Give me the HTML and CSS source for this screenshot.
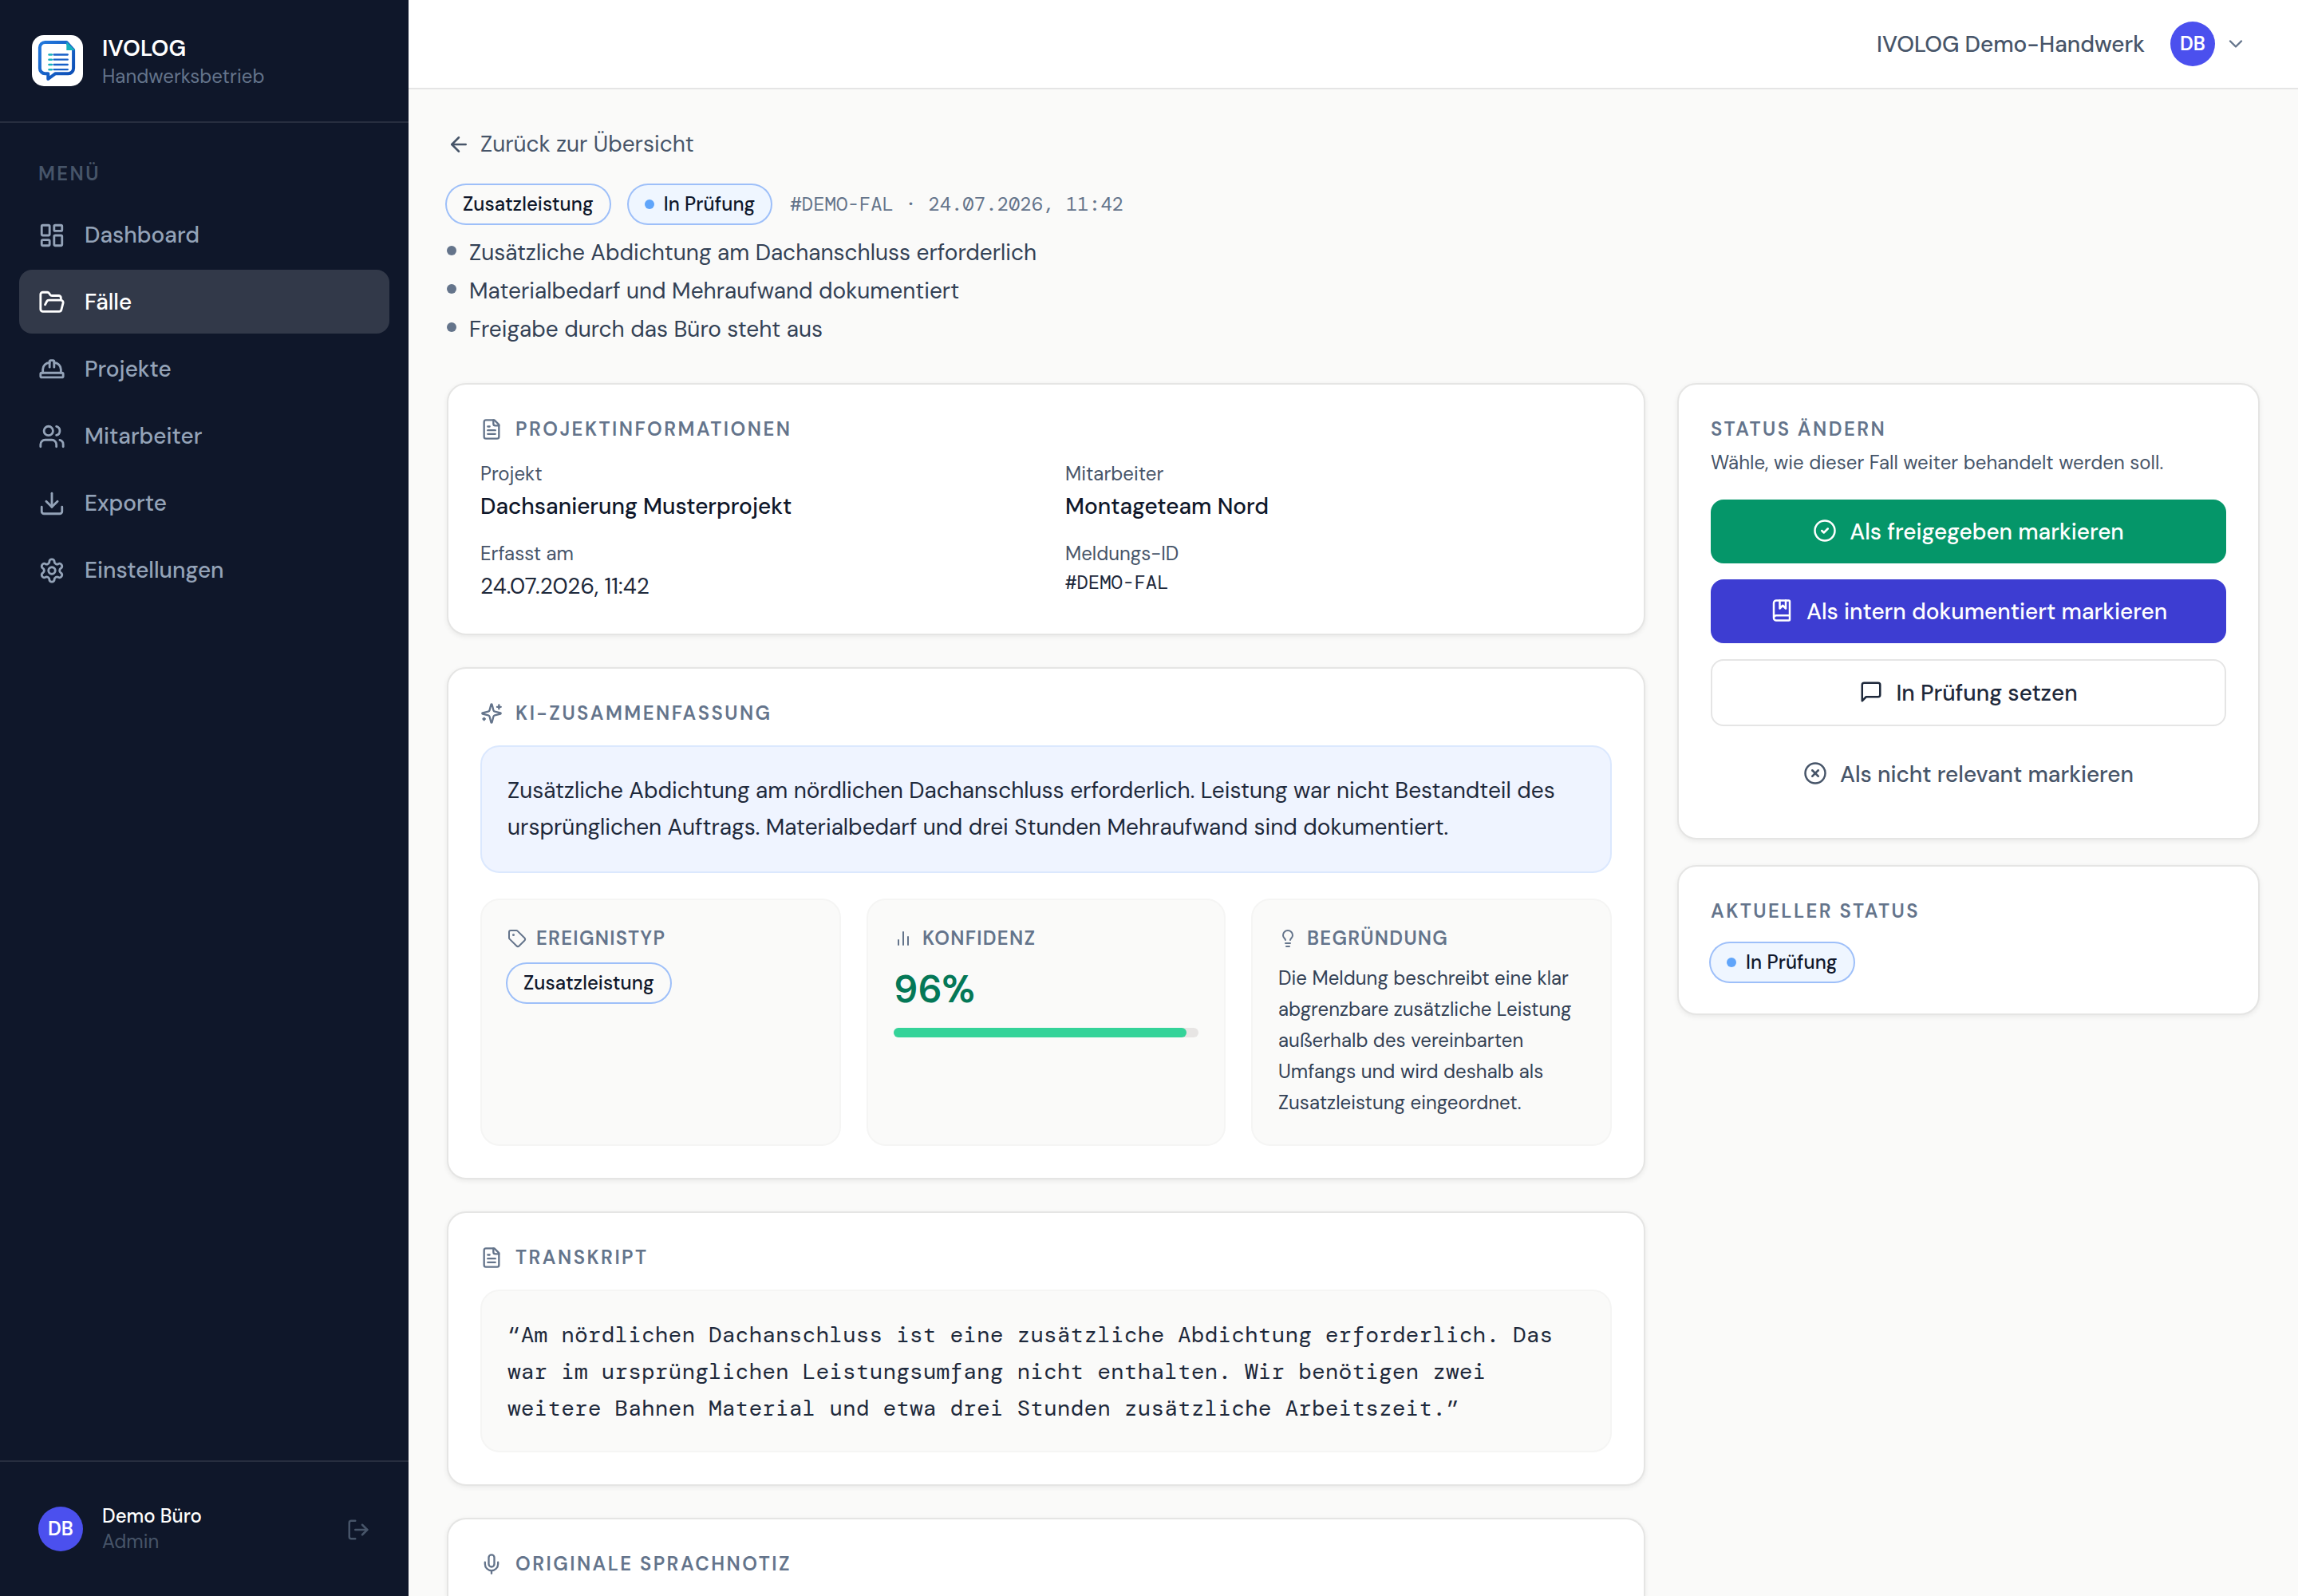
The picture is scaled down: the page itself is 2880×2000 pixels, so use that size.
FILE: index.html
```
<!DOCTYPE html>
<html lang="de">
<head>
<meta charset="utf-8">
<title>IVOLOG – Fall #DEMO-FAL</title>
<link rel="stylesheet" href="styles.css">
</head>
<body>
<svg class="sprite" aria-hidden="true">
  <symbol id="i-dashboard" viewBox="0 0 24 24"><rect x="3" y="3" width="7" height="9" rx="1"/><rect x="14" y="3" width="7" height="5" rx="1"/><rect x="14" y="12" width="7" height="9" rx="1"/><rect x="3" y="16" width="7" height="5" rx="1"/></symbol>
  <symbol id="i-folder" viewBox="0 0 24 24"><path d="m6 14 1.5-2.9A2 2 0 0 1 9.24 10H20a2 2 0 0 1 1.94 2.5l-1.54 6a2 2 0 0 1-1.95 1.5H4a2 2 0 0 1-2-2V5a2 2 0 0 1 2-2h3.9a2 2 0 0 1 1.69.9l.81 1.2a2 2 0 0 0 1.67.9H18a2 2 0 0 1 2 2v2"/></symbol>
  <symbol id="i-hat" viewBox="0 0 24 24"><path d="M2 18a1 1 0 0 0 1 1h18a1 1 0 0 0 1-1v-2a1 1 0 0 0-1-1H3a1 1 0 0 0-1 1v2z"/><path d="M10 10V5a1 1 0 0 1 1-1h2a1 1 0 0 1 1 1v5"/><path d="M4 15v-3a6 6 0 0 1 6-6"/><path d="M14 6a6 6 0 0 1 6 6v3"/></symbol>
  <symbol id="i-users" viewBox="0 0 24 24"><path d="M16 21v-2a4 4 0 0 0-4-4H6a4 4 0 0 0-4 4v2"/><circle cx="9" cy="7" r="4"/><path d="M22 21v-2a4 4 0 0 0-3-3.87"/><path d="M16 3.13a4 4 0 0 1 0 7.75"/></symbol>
  <symbol id="i-download" viewBox="0 0 24 24"><path d="M21 15v4a2 2 0 0 1-2 2H5a2 2 0 0 1-2-2v-4"/><path d="m7 10 5 5 5-5"/><path d="M12 15V3"/></symbol>
  <symbol id="i-settings" viewBox="0 0 24 24"><path d="M12.22 2h-.44a2 2 0 0 0-2 2v.18a2 2 0 0 1-1 1.73l-.43.25a2 2 0 0 1-2 0l-.15-.08a2 2 0 0 0-2.73.73l-.22.38a2 2 0 0 0 .73 2.73l.15.1a2 2 0 0 1 1 1.72v.51a2 2 0 0 1-1 1.74l-.15.09a2 2 0 0 0-.73 2.73l.22.38a2 2 0 0 0 2.73.73l.15-.08a2 2 0 0 1 2 0l.43.25a2 2 0 0 1 1 1.73V20a2 2 0 0 0 2 2h.44a2 2 0 0 0 2-2v-.18a2 2 0 0 1 1-1.73l.43-.25a2 2 0 0 1 2 0l.15.08a2 2 0 0 0 2.73-.73l.22-.39a2 2 0 0 0-.73-2.73l-.15-.08a2 2 0 0 1-1-1.74v-.5a2 2 0 0 1 1-1.74l.15-.09a2 2 0 0 0 .73-2.73l-.22-.38a2 2 0 0 0-2.73-.73l-.15.08a2 2 0 0 1-2 0l-.43-.25a2 2 0 0 1-1-1.73V4a2 2 0 0 0-2-2z"/><circle cx="12" cy="12" r="3"/></symbol>
  <symbol id="i-logout" viewBox="0 0 24 24"><path d="M9 21H5a2 2 0 0 1-2-2V5a2 2 0 0 1 2-2h4"/><path d="m16 17 5-5-5-5"/><path d="M21 12H9"/></symbol>
  <symbol id="i-chevron" viewBox="0 0 24 24"><path d="m6 9 6 6 6-6"/></symbol>
  <symbol id="i-back" viewBox="0 0 24 24"><path d="m12 19-7-7 7-7"/><path d="M19 12H5"/></symbol>
  <symbol id="i-file" viewBox="0 0 24 24"><path d="M15 2H6a2 2 0 0 0-2 2v16a2 2 0 0 0 2 2h12a2 2 0 0 0 2-2V7Z"/><path d="M14 2v4a2 2 0 0 0 2 2h4"/><path d="M10 9H8"/><path d="M16 13H8"/><path d="M16 17H8"/></symbol>
  <symbol id="i-sparkles" viewBox="0 0 24 24"><path d="M9.937 15.5A2 2 0 0 0 8.5 14.063l-6.135-1.582a.5.5 0 0 1 0-.962L8.5 9.936A2 2 0 0 0 9.937 8.5l1.582-6.135a.5.5 0 0 1 .963 0L14.063 8.5A2 2 0 0 0 15.5 9.937l6.135 1.581a.5.5 0 0 1 0 .964L15.5 14.063a2 2 0 0 0-1.437 1.437l-1.582 6.135a.5.5 0 0 1-.963 0z"/><path d="M20 3v4"/><path d="M22 5h-4"/><path d="M4 17v2"/><path d="M5 18H3"/></symbol>
  <symbol id="i-tag" viewBox="0 0 24 24"><path d="M12.586 2.586A2 2 0 0 0 11.172 2H4a2 2 0 0 0-2 2v7.172a2 2 0 0 0 .586 1.414l8.704 8.704a2.426 2.426 0 0 0 3.42 0l6.58-6.58a2.426 2.426 0 0 0 0-3.42z"/><circle cx="7.5" cy="7.5" r=".5" fill="currentColor"/></symbol>
  <symbol id="i-bars" viewBox="0 0 24 24"><path d="M18 20V10"/><path d="M12 20V4"/><path d="M6 20v-6"/></symbol>
  <symbol id="i-bulb" viewBox="0 0 24 24"><path d="M15 14c.2-1 .7-1.7 1.5-2.5 1-.9 1.5-2.2 1.5-3.5A6 6 0 0 0 6 8c0 1 .2 2.2 1.5 3.5.7.7 1.3 1.5 1.5 2.5"/><path d="M9 18h6"/><path d="M10 22h4"/></symbol>
  <symbol id="i-mic" viewBox="0 0 24 24"><path d="M12 2a3 3 0 0 0-3 3v7a3 3 0 0 0 6 0V5a3 3 0 0 0-3-3Z"/><path d="M19 10v2a7 7 0 0 1-14 0v-2"/><path d="M12 19v3"/></symbol>
  <symbol id="i-check" viewBox="0 0 24 24"><circle cx="12" cy="12" r="10"/><path d="m9 12 2 2 4-4"/></symbol>
  <symbol id="i-book" viewBox="0 0 24 24"><path d="M10 2v8l3-3 3 3V2"/><path d="M4 19.500v-15A2.500 2.500 0 0 1 6.500 2H19a1 1 0 0 1 1 1v18a1 1 0 0 1-1 1H6.500a1 1 0 0 1 0-5H20"/></symbol>
  <symbol id="i-message" viewBox="0 0 24 24"><path d="M21 15a2 2 0 0 1-2 2H7l-4 4V5a2 2 0 0 1 2-2h14a2 2 0 0 1 2 2z"/></symbol>
  <symbol id="i-x" viewBox="0 0 24 24"><circle cx="12" cy="12" r="10"/><path d="m15 9-6 6"/><path d="m9 9 6 6"/></symbol>
</svg>

<div class="app">
  <aside class="sidebar">
    <div class="brand">
      <svg class="logo" viewBox="0 0 64 64">
        <defs><linearGradient id="brand-blue" x1="0" y1="0" x2="1" y2="1"><stop offset="0" stop-color="#2379dd"/><stop offset="1" stop-color="#0b4bb3"/></linearGradient></defs>
        <rect width="64" height="64" rx="15" fill="#fff"/>
        <path d="M43.500 9H16.500A6.600 6.600 0 0 0 9.900 15.600V41.500A6.600 6.600 0 0 0 16.500 48.200H20.300V55L29.500 48.200H45.500A6.600 6.600 0 0 0 52.100 41.500V18.500Z" fill="none" stroke="url(#brand-blue)" stroke-width="4" stroke-linejoin="round"/>
        <path d="M43.300 8.300L54 19H43.300Z" fill="#17b1bd"/>
        <path d="M21.500 24.500h3.300M21.500 30.700h3.300M21.500 37h3.300M21.500 43.200h3.300" stroke="#17b1bd" stroke-width="2.600" stroke-linecap="round"/>
        <path d="M27.500 24.500h17.300M27.500 30.700h17.300M27.500 37h17.300M27.500 43.200h17.300" stroke="#1860c8" stroke-width="2.300" stroke-linecap="round"/>
      </svg>
      <div class="brand-text"><div class="brand-name">IVOLOG</div><div class="brand-sub">Handwerksbetrieb</div></div>
    </div>
    <nav class="nav">
      <div class="nav-label">MENÜ</div>
      <a class="nav-item"><svg class="icon"><use href="#i-dashboard"/></svg>Dashboard</a>
      <a class="nav-item active"><svg class="icon"><use href="#i-folder"/></svg>Fälle</a>
      <a class="nav-item"><svg class="icon"><use href="#i-hat"/></svg>Projekte</a>
      <a class="nav-item"><svg class="icon"><use href="#i-users"/></svg>Mitarbeiter</a>
      <a class="nav-item"><svg class="icon"><use href="#i-download"/></svg>Exporte</a>
      <a class="nav-item"><svg class="icon"><use href="#i-settings"/></svg>Einstellungen</a>
    </nav>
    <div class="user">
      <span class="avatar">DB</span>
      <div class="user-text"><div class="user-name">Demo Büro</div><div class="user-role">Admin</div></div>
      <svg class="icon logout"><use href="#i-logout"/></svg>
    </div>
  </aside>

  <div class="page">
    <header class="topbar">
      <span class="company">IVOLOG Demo-Handwerk</span>
      <span class="avatar">DB</span>
      <svg class="icon chevron"><use href="#i-chevron"/></svg>
    </header>
    <main class="content">
      <a class="back"><svg class="icon"><use href="#i-back"/></svg>Zurück zur Übersicht</a>
      <div class="meta">
        <span class="pill">Zusatzleistung</span>
        <span class="pill pill-blue"><i class="dot"></i>In Prüfung</span>
        <span class="mono meta-id">#DEMO-FAL · 24.07.2026, 11:42</span>
      </div>
      <ul class="points">
        <li>Zusätzliche Abdichtung am Dachanschluss erforderlich</li>
        <li>Materialbedarf und Mehraufwand dokumentiert</li>
        <li>Freigabe durch das Büro steht aus</li>
      </ul>

      <div class="columns">
        <div class="main-col">
          <section class="card">
            <h2 class="title title-info"><svg class="icon"><use href="#i-file"/></svg>PROJEKTINFORMATIONEN</h2>
            <dl class="facts">
              <div><dt>Projekt</dt><dd class="strong">Dachsanierung Musterprojekt</dd></div>
              <div><dt>Mitarbeiter</dt><dd class="strong">Montageteam Nord</dd></div>
              <div><dt>Erfasst am</dt><dd>24.07.2026, 11:42</dd></div>
              <div><dt>Meldungs-ID</dt><dd class="mono fact-id">#DEMO-FAL</dd></div>
            </dl>
          </section>

          <section class="card">
            <h2 class="title"><svg class="icon"><use href="#i-sparkles"/></svg>KI-ZUSAMMENFASSUNG</h2>
            <p class="summary">Zusätzliche Abdichtung am nördlichen Dachanschluss erforderlich. Leistung war nicht Bestandteil des<br>ursprünglichen Auftrags. Materialbedarf und drei Stunden Mehraufwand sind dokumentiert.</p>
            <div class="tiles">
              <div class="tile">
                <h3 class="tile-title"><svg class="icon"><use href="#i-tag"/></svg>EREIGNISTYP</h3>
                <span class="pill tile-pill">Zusatzleistung</span>
              </div>
              <div class="tile">
                <h3 class="tile-title"><svg class="icon"><use href="#i-bars"/></svg>KONFIDENZ</h3>
                <div class="percent">96%</div>
                <div class="track"><div class="fill" style="width:96%"></div></div>
              </div>
              <div class="tile">
                <h3 class="tile-title"><svg class="icon"><use href="#i-bulb"/></svg>BEGRÜNDUNG</h3>
                <p class="reason">Die Meldung beschreibt eine klar<br>abgrenzbare zusätzliche Leistung<br>außerhalb des vereinbarten<br>Umfangs und wird deshalb als<br>Zusatzleistung eingeordnet.</p>
              </div>
            </div>
          </section>

          <section class="card">
            <h2 class="title"><svg class="icon"><use href="#i-file"/></svg>TRANSKRIPT</h2>
            <p class="transcript mono">“Am nördlichen Dachanschluss ist eine zusätzliche Abdichtung erforderlich. Das<br>war im ursprünglichen Leistungsumfang nicht enthalten. Wir benötigen zwei<br>weitere Bahnen Material und etwa drei Stunden zusätzliche Arbeitszeit.”</p>
          </section>

          <section class="card card-audio">
            <h2 class="title"><svg class="icon"><use href="#i-mic"/></svg>ORIGINALE SPRACHNOTIZ</h2>
          </section>
        </div>

        <div class="side-col">
          <section class="card">
            <h2 class="title title-plain">STATUS ÄNDERN</h2>
            <p class="hint">Wähle, wie dieser Fall weiter behandelt werden soll.</p>
            <div class="actions">
              <button class="btn btn-green"><svg class="icon"><use href="#i-check"/></svg>Als freigegeben markieren</button>
              <button class="btn btn-indigo"><svg class="icon"><use href="#i-book"/></svg>Als intern dokumentiert markieren</button>
              <button class="btn btn-outline"><svg class="icon"><use href="#i-message"/></svg>In Prüfung setzen</button>
              <button class="btn btn-ghost"><svg class="icon"><use href="#i-x"/></svg>Als nicht relevant markieren</button>
            </div>
          </section>
          <section class="card">
            <h2 class="title">AKTUELLER STATUS</h2>
            <span class="pill pill-blue"><i class="dot"></i>In Prüfung</span>
          </section>
        </div>
      </div>
    </main>
  </div>
</div>
</body>
</html>
```
FILE: styles.css
```
*{box-sizing:border-box;margin:0;padding:0}
html,body{height:2000px;overflow:hidden}
body{width:2880px;background:#fafaf9;font:400 28px/1.5 "DM Sans",Inter,sans-serif;color:#1e293b}
.mono{font-family:"DM Mono","Liberation Mono",monospace}
.sprite{display:none}
.icon{display:block;flex:none;width:28px;height:28px;fill:none;stroke:currentColor;stroke-width:2;stroke-linecap:round;stroke-linejoin:round}

.app{display:flex;height:2000px}

/* Sidebar */
.sidebar{display:flex;flex-direction:column;flex:none;width:512px;background:#0f172a;color:#94a3b8}
.brand{display:flex;align-items:center;gap:24px;height:154px;padding:0 40px;border-bottom:2px solid rgba(255,255,255,.1)}
.logo{flex:none;width:64px;height:64px}
.brand-text{padding-top:4px}
.brand-name{line-height:35px;font-weight:600;color:#fff}
.brand-sub{font-size:24px;line-height:36px;letter-spacing:.03px;color:#64748b}
.nav{display:flex;flex-direction:column;gap:4px;flex:1;padding:48px 24px}
.nav-label{margin-bottom:16px;padding-left:24px;font-size:24px;line-height:32px;font-weight:600;letter-spacing:.1em;color:#475569}
.nav-item{display:flex;align-items:center;gap:24px;height:80px;padding:2px 24px 0;border-radius:16px;font-weight:500}
.nav-item .icon{width:34px;height:34px}
.nav-item.active{background:rgba(255,255,255,.15);color:#fff}
.user{display:flex;align-items:center;gap:24px;height:170px;padding:0 48px;border-top:2px solid rgba(255,255,255,.1)}
.user-text{flex:1;font-size:24px;line-height:32px}
.user-name{font-weight:500;color:#fff}
.user-role{color:#475569}
.logout{width:30px;height:30px;margin-top:2px;color:#475569}
.avatar{display:flex;align-items:center;justify-content:center;flex:none;width:56px;height:56px;border-radius:50%;background:#4b50ee;color:#fff;font-size:24px;line-height:32px;font-weight:600}

/* Top bar */
.page{flex:1;min-width:0}
.topbar{display:flex;align-items:center;justify-content:flex-end;height:112px;padding:0 64px;background:#fff;border-bottom:2px solid #e5e5e5}
.company{margin-right:32px;padding-top:2px;font-weight:500;color:#475569}
.chevron{margin-left:12px;color:#64748b}

/* Case header */
.content{padding:48px 48px 0}
.back{display:flex;align-items:center;gap:12px;height:42px;color:#475569}
.back .icon{width:30px;height:30px}
.meta{display:flex;align-items:center;gap:24px;height:48px;margin-top:30px}
.pill{display:inline-flex;align-items:center;gap:12px;height:48px;padding:0 20px;border-radius:24px;box-shadow:0 0 0 2px #9dbff9;font-size:24px;line-height:48px;font-weight:500;letter-spacing:.08px;color:#0f172a}
.pill-blue{background:#eff6ff}
.dot{width:12px;height:12px;border-radius:50%;background:#60a5fa}
.meta-id{font-size:24px;line-height:48px;color:#64748b}
.points{margin-top:12px;list-style:none;color:#334155}
.points li{display:flex;gap:16px;height:48px;line-height:50px}
.points li::before{content:"";flex:none;width:12px;height:12px;margin-top:16px;border-radius:50%;background:#64748b}

/* Cards */
.columns{display:grid;grid-template-columns:1502px 730px;gap:40px;margin-top:44px;align-items:start}
.main-col{display:flex;flex-direction:column;gap:40px}
.side-col{display:flex;flex-direction:column;gap:32px}
.card{padding:40px;background:#fff;border:2px solid #e5e5e4;border-radius:24px;box-shadow:0 2px 6px rgba(0,0,0,.07)}
.title{display:flex;align-items:center;gap:16px;height:32px;margin-bottom:24px;font-size:24px;line-height:32px;font-weight:600;letter-spacing:2.44px;color:#64748b}
.title-info{margin-bottom:22px}
.facts{display:grid;grid-template-columns:1fr 1fr;gap:22px 48px}
.facts dt{font-size:24px;line-height:36px;color:#475569}
.facts dd{padding-top:2px;line-height:42px;height:42px}
.facts .strong{font-weight:500;color:#0f172a}
.facts .fact-id{padding-top:0;font-size:24px;line-height:36px}
.summary{padding:32px;border:2px solid #dbe8fe;border-radius:24px;background:#eff4ff;line-height:46px;white-space:nowrap}
.tiles{display:grid;grid-template-columns:452px 450px 452px;gap:32px;margin-top:32px}
.tile{height:310px;padding:32px;border:2px solid #f5f5f4;border-radius:24px;background:#fafaf9}
.tile-title{display:flex;align-items:center;gap:12px;height:32px;font-size:24px;line-height:32px;font-weight:600;letter-spacing:1.25px;color:#64748b}
.tile-title .icon{width:24px;height:24px}
.tile-pill{margin-top:16px}
.percent{margin-top:16px;font-size:48px;line-height:64px;font-weight:600;color:#047857}
.track{height:12px;margin-top:16px;border-radius:6px;background:#e7e5e4}
.fill{height:12px;border-radius:6px;background:#34d399}
.reason{margin-top:14px;font-size:24px;line-height:39px;letter-spacing:.04px;color:#334155;white-space:nowrap}
.transcript{padding:32px 32px 30px;border:2px solid #f5f5f4;border-radius:24px;background:#fafaf9;line-height:46px;white-space:nowrap}
.card-audio{height:98px;padding-bottom:0;border-bottom:0;border-radius:24px 24px 0 0}

/* Status panel */
.title-plain{margin-bottom:8px}
.hint{font-size:24px;line-height:36px;letter-spacing:.04px;color:#475569}
.actions{display:flex;flex-direction:column;gap:20px;margin-top:28px}
.btn{display:flex;align-items:center;justify-content:center;gap:16px;height:80px;padding-top:2px;border:0;border-radius:16px;background:none;font:inherit;font-weight:500}
.btn .icon{width:30px;height:30px;margin-bottom:4px}
.btn-green{background:#059669;color:#fff}
.btn-indigo{background:#3d3dd2;color:#fff}
.btn-outline{height:84px;border:2px solid #e5e5e5;color:#1e293b}
.btn-ghost{color:#475569}
```
